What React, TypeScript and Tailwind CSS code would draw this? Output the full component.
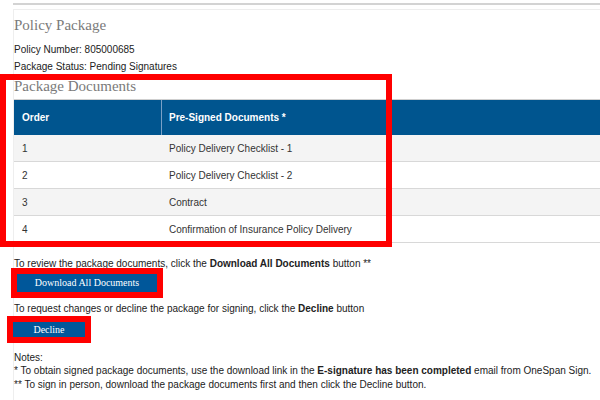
import React from "react";

const documents = [
  { order: "1", name: "Policy Delivery Checklist - 1" },
  { order: "2", name: "Policy Delivery Checklist - 2" },
  { order: "3", name: "Contract" },
  { order: "4", name: "Confirmation of Insurance Policy Delivery" },
];

const serif = "font-['Liberation_Serif','Times_New_Roman',serif]";

const App = () => {
  return (
    <div className="relative h-[400px] w-[600px] overflow-hidden bg-white font-['Liberation_Sans',Arial,sans-serif] text-[10px] text-[#222]">
      <div className="ml-[13px] mt-[3px] h-[2px] bg-[#d3d3d3]" />
      <div className="ml-[13px] mt-[4px] h-[400px] border-l border-t border-[#eeeeee]">
        <h2 className={`${serif} mt-[5px] text-[15px] leading-[20px] text-[#7a7a7a]`}>
          Policy Package
        </h2>
        <div className="mt-[6px] leading-[17px]">
          <div>Policy Number: 805000685</div>
          <div>Package Status: Pending Signatures</div>
        </div>

        <div className="relative mt-[1px]">
          <h3 className={`${serif} text-[15px] leading-[20px] text-[#7a7a7a]`}>
            Package Documents
          </h3>
          <div className="mt-[3px] border-t border-[#cfcfcf]">
            <div className="flex h-[35px] bg-[#00558f] font-bold text-white">
              <div className="flex w-[147px] items-center pl-[8px]">Order</div>
              <div className="flex flex-1 items-center border-l border-[#7aa0c6] pl-[7px]">
                Pre-Signed Documents *
              </div>
            </div>
            {documents.map((doc, i) => (
              <div
                key={doc.order}
                className={`flex h-[27px] border-b border-[#d8d8d8] text-[#333] ${
                  i % 2 === 0 ? "bg-[#f4f4f4]" : "bg-white"
                }`}
              >
                <div className="flex w-[147px] items-center pl-[8px]">{doc.order}</div>
                <div className="flex flex-1 items-center pl-[8px]">{doc.name}</div>
              </div>
            ))}
          </div>
          <div className="pointer-events-none absolute -bottom-[4px] -left-[14px] -top-[2px] w-[392px] border-[6px] border-[#ff0000]" />
        </div>

        <p className="mt-[12px] leading-[17px]">
          To review the package documents, click the <b>Download All Documents</b> button **
        </p>
        <div className="relative ml-[3px] mt-[2px] w-[140px]">
          <button
            type="button"
            className={`${serif} block h-[18px] w-[140px] bg-[#00579a] text-center text-[10px] leading-[18px] text-white`}
          >
            Download All Documents
          </button>
          <div className="pointer-events-none absolute -inset-[6px] border-[6px] border-[#ff0000]" />
        </div>

        <p className="mt-[8px] leading-[17px]">
          To request changes or decline the package for signing, click the <b>Decline</b> button
        </p>
        <div className="relative -ml-[1px] mt-[5px] w-[72px]">
          <button
            type="button"
            className={`${serif} block h-[15px] w-[72px] bg-[#00579a] text-center text-[10px] leading-[13px] text-white`}
          >
            Decline
          </button>
          <div className="pointer-events-none absolute -inset-[6px] border-[6px] border-[#ff0000]" />
        </div>

        <div className="mt-[13.5px] leading-[13.5px]">
          <div>Notes:</div>
          <div>
            * To obtain signed package documents, use the download link in the{" "}
            <b>E-signature has been completed</b> email from OneSpan Sign.
          </div>
          <div>
            ** To sign in person, download the package documents first and then click the Decline button.
          </div>
        </div>
      </div>
    </div>
  );
};

export default App;
